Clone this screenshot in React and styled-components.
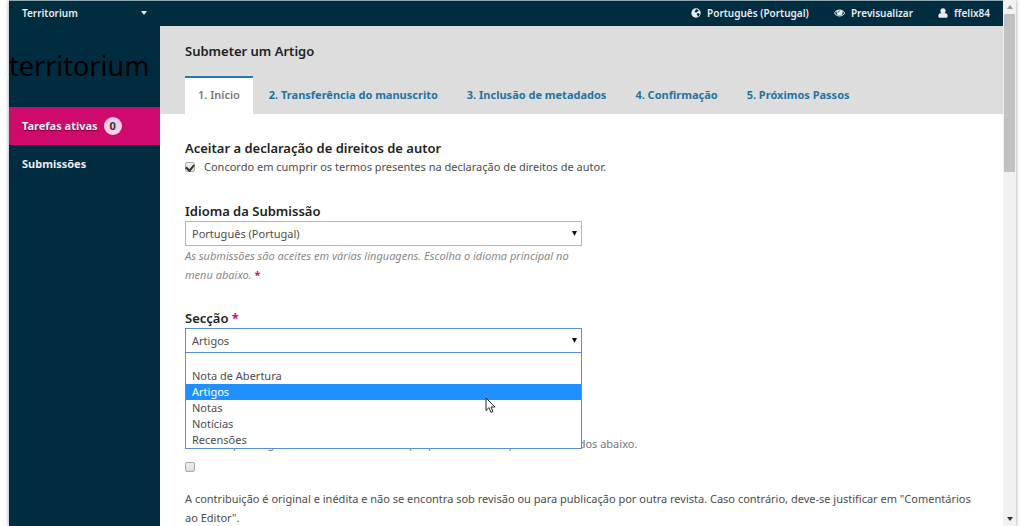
import React, { useState } from "react";
import styled, { createGlobalStyle } from "styled-components";

const steps = [
  "1. Início",
  "2. Transferência do manuscrito",
  "3. Inclusão de metadados",
  "4. Confirmação",
  "5. Próximos Passos",
];

const sections = ["", "Nota de Abertura", "Artigos", "Notas", "Notícias", "Recensões"];

const GlobeIcon = () => (
  <Icon viewBox="0 0 16 16" aria-hidden="true">
    <circle cx="8" cy="8" r="7.5" fill="currentColor" />
    <path
      fill="#002c40"
      d="M7.500 2.500 9.500 2l3 1.800-1.500 1.700-1.400.5-1 1.500-1.800-.8-1.600-.5L6.500 4.800zM10.500 8.500l2.500.3 1 1.200-1.500 2.800-2 1.200-.3-2.500-1.200-1.500z"
    />
  </Icon>
);

const EyeIcon = () => (
  <Icon viewBox="0 0 18 16" aria-hidden="true">
    <path
      fill="currentColor"
      fillRule="evenodd"
      d="M9 2.500C5.200 2.500 2 4.800.2 8 2 11.200 5.200 13.500 9 13.500s7-2.300 8.800-5.500C16 4.800 12.800 2.500 9 2.500zM3.500 6C2.700 6.500 2.100 7.200 1.700 8c1.600 2.500 4.300 4.200 7.300 4.200s5.700-1.700 7.300-4.200c-.5-.8-1.100-1.500-1.900-2l-1-.8a4.600 4.600 0 1 1-8.800 0z"
    />
    <circle cx="9" cy="7.500" r="4.500" fill="currentColor" />
    <path
      fill="none"
      stroke="#002c40"
      strokeLinecap="round"
      d="M6.500 7A2.600 2.600 0 0 1 9 4.500"
    />
  </Icon>
);

const UserIcon = () => (
  <Icon viewBox="0 0 16 16" aria-hidden="true">
    <path
      fill="currentColor"
      d="M8 .5a4.200 4.200 0 0 1 4.200 4.200c0 1.500-.7 2.900-1.800 3.700h1.800c2.300.4 3.300 2.400 3.300 4.600 0 1.400-1 2.500-2.500 2.500H3C1.500 15.500.5 14.400.5 13c0-2.200 1-4.200 3.300-4.600h1.800C4.500 7.600 3.800 6.200 3.800 4.700A4.200 4.200 0 0 1 8 .5z"
    />
  </Icon>
);

const Caret = ({ up }) => (
  <CaretSvg viewBox="0 0 6 4" aria-hidden="true">
    <path fill="currentColor" d={up ? "M0 4 3 0l3 4z" : "M0 0h6L3 4z"} />
  </CaretSvg>
);

const SelectArrow = () => (
  <ArrowSvg viewBox="0 0 5 5" aria-hidden="true">
    <path fill="currentColor" d="M0 0h5L2.500 5z" />
  </ArrowSvg>
);

const Pointer = () => (
  <PointerSvg viewBox="0 0 11 17" aria-hidden="true">
    <path
      fill="#fff"
      stroke="#222"
      d="M1 1v12.500l2.900-2.800 2.100 4.700 2-.9-2-4.500h4z"
    />
  </PointerSvg>
);

const App = () => {
  const [section, setSection] = useState("Artigos");
  const [accepted, setAccepted] = useState(true);

  return (
    <>
      <GlobalStyle />
      <Frame>
        <Page>
          <TopBar>
            <ContextButton type="button">
              Territorium
              <Caret />
            </ContextButton>
            <UserNav>
              <UserLink href="#language">
                <GlobeIcon />
                Português (Portugal)
              </UserLink>
              <UserLink href="#preview">
                <EyeIcon />
                Previsualizar
              </UserLink>
              <UserLink href="#profile">
                <UserIcon />
                ffelix84
              </UserLink>
            </UserNav>
          </TopBar>
          <Body>
            <Sidebar>
              <Logo href="#home">territorium</Logo>
              <MenuLink href="#tasks" $active>
                Tarefas ativas
                <Count>0</Count>
              </MenuLink>
              <MenuLink href="#submissions">Submissões</MenuLink>
            </Sidebar>
            <Main>
              <Header>
                <Title>Submeter um Artigo</Title>
                <Tabs>
                  {steps.map((step, i) => (
                    <Tab key={step} href={`#step-${i + 1}`} $active={i === 0}>
                      {step}
                    </Tab>
                  ))}
                </Tabs>
              </Header>
              <Form>
                <Field>
                  <Heading>Aceitar a declaração de direitos de autor</Heading>
                  <CheckRow>
                    <Checkbox
                      type="checkbox"
                      checked={accepted}
                      onChange={(e) => setAccepted(e.target.checked)}
                    />
                    Concordo em cumprir os termos presentes na declaração de direitos de autor.
                  </CheckRow>
                </Field>
                <Field>
                  <Label htmlFor="locale">Idioma da Submissão</Label>
                  <SelectBox>
                    <Select id="locale" defaultValue="pt">
                      <option value="pt">Português (Portugal)</option>
                    </Select>
                    <SelectArrow />
                  </SelectBox>
                  <Hint>
                    As submissões são aceites em várias linguagens. Escolha o idioma principal no
                    menu abaixo. <Required>*</Required>
                  </Hint>
                </Field>
                <SectionField>
                  <Label htmlFor="section">
                    Secção <Required>*</Required>
                  </Label>
                  <SelectBox>
                    <Select
                      id="section"
                      $open
                      value={section}
                      onChange={(e) => setSection(e.target.value)}
                    >
                      {sections.map((name) => (
                        <option key={name} value={name}>
                          {name}
                        </option>
                      ))}
                    </Select>
                    <SelectArrow />
                    <Options role="listbox" aria-label="Secção">
                      {sections.map((name) => (
                        <Option
                          key={name}
                          role="option"
                          aria-selected={name === section}
                          $selected={name === section}
                          onClick={() => setSection(name)}
                        >
                          {name}
                        </Option>
                      ))}
                      <Pointer />
                    </Options>
                  </SelectBox>
                </SectionField>
                <Note>
                  Antes de prosseguir deve ler e reconhecer que preenche os requisitos indicados
                  abaixo.
                </Note>
                <Requirement>
                  <Checkbox type="checkbox" />
                  <span>
                    A contribuição é original e inédita e não se encontra sob revisão ou para
                    publicação por outra revista. Caso contrário, deve-se justificar em
                    "Comentários ao Editor".
                  </span>
                </Requirement>
              </Form>
            </Main>
          </Body>
        </Page>
        <Scrollbar aria-hidden="true">
          <ScrollEnd $muted>
            <Caret up />
          </ScrollEnd>
          <Thumb />
          <ScrollEnd>
            <Caret />
          </ScrollEnd>
        </Scrollbar>
      </Frame>
    </>
  );
};

//styled components
const GlobalStyle = createGlobalStyle`
  * {
    box-sizing: border-box;
  }
  body {
    margin: 0;
    background: #fff;
    color: #4c4c4c;
    font: 11px/19px "Noto Sans", sans-serif;
  }
`;
const Frame = styled.div`
  display: flex;
  height: 100vh;
  margin: 0 8px 0 9px;
  overflow: hidden;
  box-shadow: 0 0 4px rgba(0, 0, 0, 0.4);
`;
const Page = styled.div`
  display: flex;
  flex: 1;
  flex-direction: column;
  min-width: 0;
  border-top: 1px solid #8fa5af;
`;
const Icon = styled.svg`
  height: 10px;
  flex: none;
`;
const CaretSvg = styled.svg`
  width: 6px;
  height: 4px;
  flex: none;
`;
const ArrowSvg = styled.svg`
  position: absolute;
  right: 5px;
  z-index: 2;
  width: 5px;
  height: 5px;
  color: #111;
  pointer-events: none;
`;
const TopBar = styled.header`
  display: flex;
  flex: none;
  justify-content: space-between;
  height: 25px;
  padding-bottom: 1px;
  background: #002c40;
`;
const ContextButton = styled.button`
  display: flex;
  align-items: center;
  justify-content: space-between;
  width: 151px;
  padding: 0 13px;
  border: 0;
  background: none;
  color: #e8edf0;
  font: 600 10px/24px "Noto Sans", sans-serif;
`;
const UserNav = styled.nav`
  display: flex;
  gap: 25px;
  padding-right: 13px;
`;
const UserLink = styled.a`
  display: flex;
  align-items: center;
  gap: 6px;
  color: #e8edf0;
  font: 600 10px/24px "Noto Sans", sans-serif;
  text-decoration: none;
`;
const Body = styled.div`
  display: flex;
  flex: 1;
  min-height: 0;
`;
const Sidebar = styled.nav`
  width: 151px;
  flex: none;
  background: #002c40;
`;
const Logo = styled.a`
  display: block;
  height: 81px;
  color: #000;
  font-size: 27px;
  line-height: 80px;
  text-decoration: none;
`;
const MenuLink = styled.a`
  display: flex;
  align-items: center;
  gap: 6px;
  height: 38px;
  padding: 0 13px 1px;
  background: ${({ $active }) => ($active ? "#d00a6c" : "none")};
  color: #e8edf0;
  font-weight: bold;
  text-decoration: none;
  text-shadow: ${({ $active }) => ($active ? "0 1px 1px #5c0430" : "none")};
`;
const Count = styled.span`
  width: 18px;
  height: 18px;
  border-radius: 50%;
  background: #f8cfe2;
  color: #333;
  line-height: 18px;
  text-align: center;
  text-shadow: none;
`;
const Main = styled.main`
  flex: 1;
  min-width: 0;
`;
const Header = styled.div`
  display: flex;
  flex-direction: column;
  justify-content: space-between;
  height: 88px;
  padding: 15px 25px 0;
  background: #ddd;
`;
const Title = styled.h1`
  margin: 0;
  color: #222;
  font-size: 13px;
  font-weight: 600;
  line-height: 20px;
`;
const Tabs = styled.nav`
  display: flex;
  gap: 3px;
`;
const Tab = styled.a`
  height: 38px;
  padding: 0 13px;
  border-top: 2px solid ${({ $active }) => ($active ? "#1e7fb0" : "transparent")};
  background: ${({ $active }) => ($active ? "#fff" : "none")};
  color: ${({ $active }) => ($active ? "#777" : "#1f74a3")};
  font-weight: ${({ $active }) => ($active ? 600 : 700)};
  line-height: 34px;
  text-decoration: none;
`;
const Form = styled.form`
  padding: 25px 25px 0;
`;
const Field = styled.div`
  max-width: 397px;
  margin-bottom: 25px;
`;
const SectionField = styled(Field)`
  margin-bottom: 81px;
`;
const Heading = styled.h2`
  margin: 0;
  color: #222;
  font-size: 13px;
  font-weight: 600;
  line-height: 19px;
`;
const Label = styled.label`
  display: block;
  color: #222;
  font-size: 13px;
  font-weight: 600;
  line-height: 19px;
`;
const CheckRow = styled.label`
  display: flex;
  align-items: center;
  gap: 9px;
  padding-bottom: 1px;
  line-height: 18px;
  white-space: nowrap;
`;
const Checkbox = styled.input`
  appearance: none;
  display: flex;
  align-items: flex-start;
  justify-content: center;
  width: 10px;
  height: 10px;
  margin: 0;
  flex: none;
  border: 1px solid #aaa;
  border-radius: 2px;
  background: linear-gradient(#eee, #ddd);
  &:checked::after {
    content: "";
    width: 4px;
    height: 6px;
    border: solid #333;
    border-width: 0 2px 2px 0;
    transform: rotate(40deg);
  }
`;
const SelectBox = styled.div`
  position: relative;
  display: flex;
  align-items: center;
`;
const Select = styled.select`
  appearance: none;
  position: relative;
  z-index: 2;
  width: 100%;
  height: 25px;
  padding: 0 6px;
  border: 1px solid ${({ $open }) => ($open ? "#5b8ed8" : "#b5b5b5")};
  border-radius: 0;
  outline: 0;
  background: #fff;
  color: #4c4c4c;
  font: 11px/19px "Noto Sans", sans-serif;
`;
const Options = styled.ul`
  position: absolute;
  top: 24px;
  left: 0;
  z-index: 1;
  width: 100%;
  margin: 0;
  padding: 0;
  border: 1px solid #5b8ed8;
  border-top: 0;
  background: #fff;
  list-style: none;
`;
const Option = styled.li`
  height: 16px;
  padding: 0 6px;
  background: ${({ $selected }) => ($selected ? "#1e90ff" : "none")};
  color: ${({ $selected }) => ($selected ? "#fff" : "#4c4c4c")};
  line-height: 16px;
`;
const PointerSvg = styled.svg`
  position: absolute;
  top: 45px;
  left: 299px;
  width: 11px;
  height: 17px;
  pointer-events: none;
`;
const Hint = styled.p`
  margin: 0;
  color: #888;
  font-style: italic;
`;
const Required = styled.span`
  color: #d00a6c;
  font-style: normal;
  font-weight: bold;
`;
const Note = styled.p`
  margin: 0;
  color: #777;
`;
const Requirement = styled.label`
  display: flex;
  flex-direction: column;
  gap: 17px;
  margin-top: 9px;
`;
const Scrollbar = styled.div`
  display: flex;
  flex: none;
  flex-direction: column;
  width: 13px;
  background: #f1f1f1;
`;
const ScrollEnd = styled.div`
  display: flex;
  align-items: center;
  justify-content: center;
  height: 14px;
  color: ${({ $muted }) => ($muted ? "#999" : "#333")};
`;
const Thumb = styled.div`
  height: 30%;
  margin: 0 1px auto;
  background: #c1c1c1;
`;

export default App;
